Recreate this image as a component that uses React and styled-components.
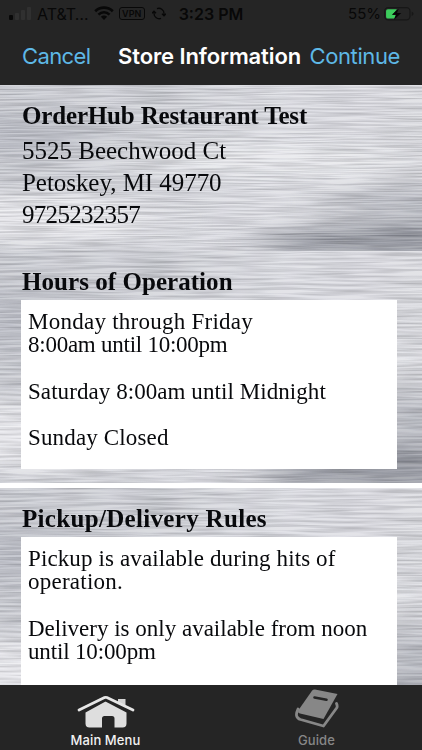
import styled, { createGlobalStyle } from "styled-components";

export default function App() {
  return (
    <>
      <GlobalStyle />
      <Screen>
        <StatusBar>
          <SignalIcon />
          <StatusText $left={6} $size={16}>AT&amp;T…</StatusText>
          <WifiIcon />
          <VpnBadge>VPN</VpnBadge>
          <SyncIcon />
          <Clock>3:23 PM</Clock>
          <Battery>
            <StatusText $size={15}>55%</StatusText>
            <BatteryIcon />
          </Battery>
        </StatusBar>
        <NavBar>
          <NavButton $spacing="-0.6px">Cancel</NavButton>
          <NavTitle>Store Information</NavTitle>
          <NavButton $spacing="-0.4px">Continue</NavButton>
        </NavBar>

        <Content>
          <Section $height={166}>
            <BrushedMetal id="metal-store" height={166} />
            <Heading $spacing="-0.16px">OrderHub Restaurant Test</Heading>
            <Address>
              <Line>5525 Beechwood Ct</Line>
              <Line $spacing="-0.05px">Petoskey, MI 49770</Line>
              <Line $spacing="-0.7px">9725232357</Line>
            </Address>
          </Section>
          <Section $height={232}>
            <BrushedMetal id="metal-hours" height={232} />
            <Heading $spacing="0.05px">Hours of Operation</Heading>
            <Note>
              <NoteLine $spacing="0.25px">Monday through Friday</NoteLine>
              <NoteLine $spacing="-0.25px">8:00am until 10:00pm</NoteLine>
              <br />
              <NoteLine $spacing="0.07px">Saturday 8:00am until Midnight</NoteLine>
              <br />
              <NoteLine $spacing="0.15px">Sunday Closed</NoteLine>
            </Note>
          </Section>
          <Section $height={232} $gap={5}>
            <BrushedMetal id="metal-rules" height={232} />
            <Heading $spacing="0.32px">Pickup/Delivery Rules</Heading>
            <Note>
              <NoteLine $spacing="0.12px">Pickup is available during hits of</NoteLine>
              <NoteLine $spacing="0.25px">operation.</NoteLine>
              <br />
              <NoteLine>Delivery is only available from noon</NoteLine>
              <NoteLine $spacing="-0.15px">until 10:00pm</NoteLine>
            </Note>
          </Section>
        </Content>

        <TabBar>
          <Tab $active>
            <HouseIcon />
            Main Menu
          </Tab>
          <Tab>
            <BookIcon />
            Guide
          </Tab>
        </TabBar>
      </Screen>
    </>
  );
}

// stretched noise over soft highlights and shadows
function BrushedMetal({ id, height }) {
  return (
    <Metal viewBox="0 0 422 232" preserveAspectRatio="none" style={{ height }}>
      <defs>
        <linearGradient id={id + "-base"} x1="0" y1="0" x2="1" y2="0.25">
          <stop offset="0" stopColor="#c2c4cb" />
          <stop offset="0.35" stopColor="#cacCd2" />
          <stop offset="0.7" stopColor="#d9dae0" />
          <stop offset="1" stopColor="#d7d8dd" />
        </linearGradient>
        <filter
          id={id + "-blur"}
          x="-50%"
          y="-50%"
          width="200%"
          height="200%"
          colorInterpolationFilters="sRGB"
        >
          <feGaussianBlur stdDeviation="26 11" />
        </filter>
        <filter id={id + "-grain"} x="0" y="0" width="100%" height="100%" colorInterpolationFilters="sRGB">
          <feTurbulence type="fractalNoise" baseFrequency="0.016 0.4" numOctaves="2" seed="11" />
          <feColorMatrix
            values="1.2 0 0 0 0.2
                    1.2 0 0 0 0.2
                    1.2 0 0 0 0.22
                    0 0 0 0 1"
          />
        </filter>
      </defs>
      <rect width="422" height="232" fill={`url(#${id}-base)`} />
      <g filter={`url(#${id}-blur)`}>
        <ellipse cx="20" cy="70" rx="90" ry="30" fill="#a9acb5" opacity="0.6" />
        <ellipse cx="30" cy="185" rx="130" ry="36" fill="#eeeef2" opacity="0.85" />
        <ellipse cx="270" cy="105" rx="150" ry="26" fill="#e8e9ed" opacity="0.7" />
        <ellipse cx="430" cy="165" rx="100" ry="24" fill="#9da0a9" opacity="0.65" />
        <ellipse cx="410" cy="220" rx="150" ry="28" fill="#7d818b" opacity="0.9" />
      </g>
      <rect width="422" height="232" filter={`url(#${id}-grain)`} opacity="0.28" />
    </Metal>
  );
}

function SignalIcon() {
  return (
    <svg width="22" height="15" viewBox="0 0 22 15">
      <rect x="0" y="9" width="4" height="5" rx="1" fill="#080808" />
      <rect x="6" y="7" width="4" height="7" rx="1" fill="#303030" />
      <rect x="12" y="4" width="4" height="10" rx="1" fill="#303030" />
      <rect x="18" y="1" width="4" height="13" rx="1" fill="#303030" />
    </svg>
  );
}

function WifiIcon() {
  return (
    <svg width="20" height="15" viewBox="0 0 20 15" fill="none" stroke="#080808" style={{ marginLeft: 5 }}>
      <path d="M1.2 5.2a12.6 12.6 0 0 1 17.6 0" strokeWidth="2.6" />
      <path d="M4.5 8.6a7.8 7.8 0 0 1 11 0" strokeWidth="2.5" />
      <path d="M10 14l-3.1-3.2a4.4 4.4 0 0 1 6.2 0z" fill="#080808" stroke="none" />
    </svg>
  );
}

// two open arcs with an arrow head on each
function SyncIcon() {
  return (
    <svg width="14" height="13" viewBox="0 0 14 13" fill="none" stroke="#080808" strokeWidth="1.3" style={{ marginLeft: 7 }}>
      <path d="M5 1.6a5.2 5.2 0 0 1 7 4.9v2M10 6.8l2 2 2-2" />
      <path d="M9 11.4a5.2 5.2 0 0 1-7-4.9v-2M0 6.2l2-2 2 2" />
    </svg>
  );
}

function BatteryIcon() {
  return (
    <svg width="30" height="16" viewBox="0 0 32 16">
      <rect x="0.7" y="1.2" width="27" height="13" rx="3.8" fill="none" stroke="#171717" strokeWidth="1.3" />
      <path d="M4.2 2.8h9.5L9 9h3.5l-1.5 3.8H4.2q-2 0-2-2v-6q0-2 2-2z" fill="#3ccc5c" />
      <path d="M29.5 5.5q2 .6 2 2.2t-2 2.3z" fill="#171717" />
      <path d="M15.8 2L8.3 8.7h4.6L10.6 14 18.4 7h-4.6z" fill="#050505" />
    </svg>
  );
}

function HouseIcon() {
  return (
    <svg width="60" height="34" viewBox="0 0 60 34">
      <path
        d="M9.5 17.5l20-11 21 11v11q0 4-4 4h-8v-9q0-2.5-2.5-2.5h-7.500q-2.500 0-2.500 2.500v9H13.500q-4 0-4-4z"
        fill="#dedede"
      />
      <path d="M3 15.5L29.5 3 57 15.500" fill="none" stroke="#252525" strokeWidth="5.5" />
      <path d="M42 4h7.500v8.500L42 8.500z" fill="#d4d4d4" />
      <path
        d="M3 15L28.500 2.600q1.200-.6 2.400 0L57 15"
        fill="none"
        stroke="#e6e6e6"
        strokeWidth="2.8"
        strokeLinecap="round"
      />
    </svg>
  );
}

function BookIcon() {
  return (
    <svg width="44" height="40" viewBox="0 0 44 40">
      <path d="M17 1.8q1.2-1.600 3-1.300L42.500 5l-14 25L5 24.500q-3-1-1.500-3.500z" fill="#878787" />
      <path
        d="M3 20q-4 8.500 2.500 10.500l23 6.500L42 18.500q.5-2-.5-4"
        fill="none"
        stroke="#878787"
        strokeWidth="2.8"
        strokeLinejoin="round"
        strokeLinecap="round"
      />
      <path d="M19.500 8.500l12 2.200" stroke="#252525" strokeWidth="2.6" strokeLinecap="round" />
    </svg>
  );
}

const GlobalStyle = createGlobalStyle`
  body {
    margin: 0;
    background: #ffffff;
  }

  p {
    margin: 0;
  }
`;

const Screen = styled.div`
  display: flex;
  flex-direction: column;
  width: 422px;
  height: 750px;
  overflow: hidden;
  font-family: Inter, "Liberation Sans", sans-serif;
`;

const StatusBar = styled.div`
  display: flex;
  align-items: center;
  height: 27px;
  flex-shrink: 0;
  padding: 0 8px 0 9px;
  background: #252525;
  color: #080808;
  box-sizing: border-box;
`;

const StatusText = styled.span`
  margin-left: ${(props) => props.$left || 0}px;
  font-size: ${(props) => props.$size}px;
`;

const VpnBadge = styled.span`
  margin-left: 5px;
  width: 26px;
  height: 13px;
  box-sizing: border-box;
  border: 1px solid #080808;
  border-radius: 3px;
  font-size: 9px;
  font-weight: 600;
  line-height: 11px;
  text-align: center;
`;

const Clock = styled.span`
  margin-left: 13px;
  font-size: 16px;
  font-weight: 600;
`;

const Battery = styled.div`
  display: flex;
  align-items: center;
  gap: 3px;
  margin-left: auto;
`;

const NavBar = styled.div`
  display: flex;
  align-items: center;
  justify-content: space-between;
  height: 58px;
  flex-shrink: 0;
  padding: 0 22px 1px;
  box-sizing: border-box;
  background: #252525;
`;

const NavButton = styled.button`
  padding: 0;
  border: none;
  background: none;
  color: #5eb8e6;
  font-family: inherit;
  font-size: 22px;
  letter-spacing: ${(props) => props.$spacing};
  cursor: pointer;
`;

const NavTitle = styled.h1`
  margin: 0 0 0 19px;
  color: #ffffff;
  font-size: 22px;
  font-weight: 600;
  letter-spacing: -0.1px;
  white-space: nowrap;
`;

const Content = styled.div`
  display: flex;
  flex-direction: column;
  flex: 1;
  min-height: 0;
  overflow: hidden;
  color: #08090c;
  font-family: "Palatino", "Palatino Linotype", "Liberation Serif", serif;
`;

const Section = styled.section`
  position: relative;
  height: ${(props) => props.$height}px;
  flex-shrink: 0;
  margin-top: ${(props) => props.$gap || 0}px;
  padding: 15px 25px 0 21px;
  box-sizing: border-box;
  isolation: isolate;
`;

const Metal = styled.svg`
  position: absolute;
  top: 0;
  left: 0;
  width: 100%;
  z-index: -1;
`;

const Heading = styled.h2`
  margin: 0;
  padding: 0 0 2px 1px;
  font-size: 25px;
  font-weight: 700;
  line-height: 32px;
  letter-spacing: ${(props) => props.$spacing};
  white-space: nowrap;
`;

const Address = styled.div`
  padding: 1px 0 0 1px;
`;

const Line = styled.p`
  font-size: 25px;
  line-height: 31.8px;
  letter-spacing: ${(props) => props.$spacing || "normal"};
  white-space: nowrap;
`;

const Note = styled.div`
  height: 169px;
  padding: 10px 0 0 7px;
  box-sizing: border-box;
  background: #ffffff;
  font-size: 23px;
  line-height: 23.2px;
  white-space: nowrap;
`;

const NoteLine = styled.p`
  letter-spacing: ${(props) => props.$spacing || "normal"};
`;

const TabBar = styled.div`
  display: grid;
  grid-template-columns: 1fr 1fr;
  height: 65px;
  flex-shrink: 0;
  background: #252525;
`;

const Tab = styled.div`
  display: flex;
  flex-direction: column;
  align-items: center;
  justify-content: flex-end;
  gap: 3px;
  padding-bottom: 2px;
  color: ${(props) => (props.$active ? "#f2f2f2" : "#878787")};
  font-size: 13px;
  font-weight: 500;
  letter-spacing: 0.1px;
`;
